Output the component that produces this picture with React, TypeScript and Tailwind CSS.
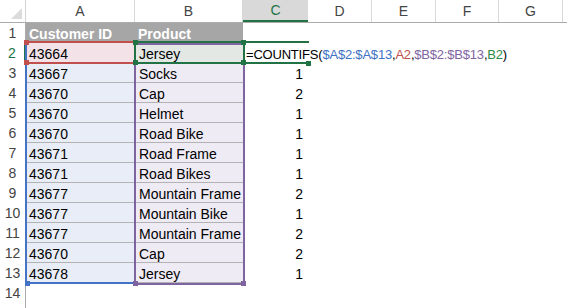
import React from 'react';

// column letters + widths (row header is separate)
const cols = [
  { label: 'A', w: 'w-[109px]' },
  { label: 'B', w: 'w-[108px]' },
  { label: 'C', w: 'w-[65px]' },
  { label: 'D', w: 'w-[64px]' },
  { label: 'E', w: 'w-[64px]' },
  { label: 'F', w: 'w-[63px]' },
  { label: 'G', w: 'w-[64px]' },
  { label: '', w: 'w-[64px]' },
];

const data: [string, string, string][] = [
  ['43664', 'Jersey', ''],
  ['43667', 'Socks', '1'],
  ['43670', 'Cap', '2'],
  ['43670', 'Helmet', '1'],
  ['43670', 'Road Bike', '1'],
  ['43671', 'Road Frame', '1'],
  ['43671', 'Road Bikes', '1'],
  ['43677', 'Mountain Frame', '2'],
  ['43677', 'Mountain Bike', '1'],
  ['43677', 'Mountain Frame', '2'],
  ['43670', 'Cap', '2'],
  ['43678', 'Jersey', '1'],
];

function RowHeader({ n, active }: { n?: number; active?: boolean }) {
  return (
    <div
      className={
        active
          ? 'w-[26px] h-[20px] shrink-0 flex items-center justify-center pt-[1px] border-r-2 border-[#217346] text-[#217346] text-[14px]'
          : 'w-[26px] h-[20px] shrink-0 flex items-center justify-center pt-[1px] border-r border-[#ababab] text-[#444] text-[14px]'
      }
    >
      {n}
    </div>
  );
}

function Formula() {
  return (
    <span className="whitespace-nowrap text-[13px] tracking-[-0.2px]">
      =COUNTIFS(
      <span className="text-[#3d72c4]">$A$2:$A$13</span>,
      <span className="text-[#c0504d]">A2</span>,
      <span className="text-[#8064a2]">$B$2:$B$13</span>,
      <span className="text-[#2e8a4a]">B2</span>)
    </span>
  );
}

// little square drag handles on range corners
function Handle({ pos, color }: { pos: string; color: string }) {
  return <div className={`absolute w-[5px] h-[5px] ${pos} ${color}`} />;
}

export default function App() {
  return (
    <div className="relative w-[567px] h-[308px] overflow-hidden bg-white text-black font-['Liberation_Sans',Arial,sans-serif]">
      {/* Column headers */}
      <div className="flex h-[23px] border-b border-[#ababab]">
        <div className="relative w-[26px] shrink-0 border-r border-[#d4d4d4]">
          <svg className="absolute left-[11px] top-[8px]" width="11" height="11" viewBox="0 0 11 11">
            <polygon points="11,0 11,11 0,11" fill="#dcdcdc" />
          </svg>
        </div>
        {cols.map((c, i) =>
          c.label === 'C' ? (
            <div
              key={i}
              className={`${c.w} shrink-0 flex items-center justify-center bg-[#d9d9d9] border-b-2 border-[#217346] text-[#217346] text-[14px]`}
            >
              {c.label}
            </div>
          ) : (
            <div
              key={i}
              className={`${c.w} shrink-0 flex items-center justify-center border-r border-[#d9d9d9] text-[#444] text-[14px]`}
            >
              {c.label}
            </div>
          )
        )}
      </div>

      {/* Row 1 - headings */}
      <div className="flex h-[20px]">
        <RowHeader n={1} />
        <div className="w-[109px] shrink-0 bg-[#a6a6a6] text-white font-bold text-[14px] pl-[3px] pt-[3px] leading-[17px]">
          Customer ID
        </div>
        <div className="w-[108px] shrink-0 bg-[#a6a6a6] text-white font-bold text-[14px] pl-[3px] pt-[3px] leading-[17px]">
          Product
        </div>
      </div>

      {/* Data rows */}
      {data.map(([id, product, count], i) => {
        const first = i === 0;
        return (
          <div key={i} className="flex h-[20px]">
            <RowHeader n={i + 2} active={first} />
            <div
              className={`w-[109px] shrink-0 text-[14px] pl-[3px] pt-[3px] leading-[16px] border-b border-[#b3b3b3] ${
                first ? 'bg-[#f3e3e8]' : 'bg-[#e9edf7]'
              }`}
            >
              {id}
            </div>
            <div
              className={`w-[108px] shrink-0 text-[14px] pl-[4px] pt-[3px] leading-[16px] border-b border-[#b3b3b3] ${
                first ? 'bg-[#e3e8e4]' : 'bg-[#efebf5]'
              }`}
            >
              {product}
            </div>
            {first ? (
              <div className="relative z-20 w-[65px] shrink-0 pl-[3px] pt-[3px] leading-[16px] overflow-visible">
                <Formula />
              </div>
            ) : (
              <div className="w-[65px] shrink-0 text-right text-[14px] pr-[5px] pt-[3px] leading-[16px]">
                {count}
              </div>
            )}
          </div>
        );
      })}

      {/* Rows 14 and (partial) 15 */}
      <div className="flex h-[20px]">
        <RowHeader n={14} />
      </div>
      <div className="flex h-[20px]">
        <RowHeader />
      </div>

      {/* Range highlight overlays */}
      <div className="absolute left-[25px] top-[43px] w-[111px] h-[241px] border-2 border-t-0 border-[#4472c4] z-10" />
      <div className="absolute left-[134px] top-[43px] w-[111px] h-[242px] border-2 border-[#8064a2] z-10" />
      <div className="absolute left-[26px] top-[41px] w-[109px] h-[23px] border-y-2 border-[#c0504d] z-10" />
      <div className="absolute left-[134px] top-[41px] w-[111px] h-[23px] border-2 border-[#217346] z-10" />
      <div className="absolute left-[243px] top-[41px] w-[66px] h-[23px] border-2 border-r-0 border-[#217346] z-10" />

      <Handle pos="left-[24px] top-[40px] z-30" color="bg-[#c0504d]" />
      <Handle pos="left-[24px] top-[60px] z-30" color="bg-[#c0504d]" />
      <Handle pos="left-[133px] top-[40px] z-30" color="bg-[#217346]" />
      <Handle pos="left-[133px] top-[60px] z-30" color="bg-[#217346]" />
      <Handle pos="left-[241px] top-[40px] z-30" color="bg-[#217346]" />
      <Handle pos="left-[241px] top-[60px] z-30" color="bg-[#217346]" />
      <Handle pos="left-[306px] top-[61px] z-30" color="bg-[#217346]" />
      <Handle pos="left-[25px] top-[281px] z-30" color="bg-[#4472c4]" />
      <Handle pos="left-[133px] top-[281px] z-30" color="bg-[#8064a2]" />
      <Handle pos="left-[241px] top-[281px] z-30" color="bg-[#8064a2]" />
    </div>
  );
}
